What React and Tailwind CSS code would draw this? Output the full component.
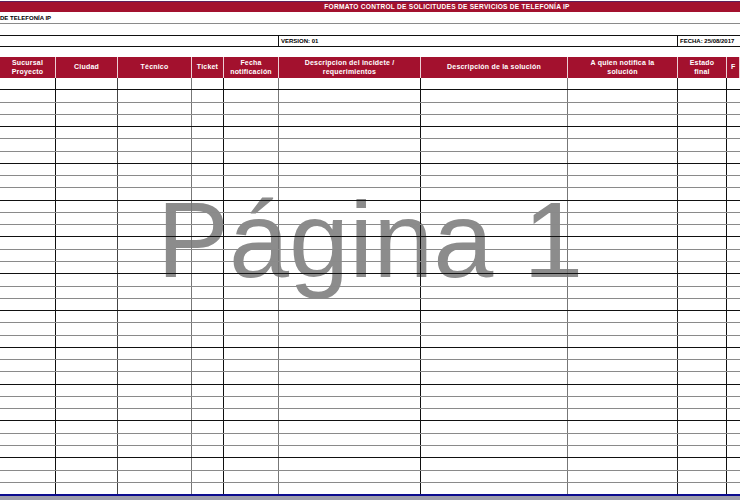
const columns = [
  { w: 'w-[56px]', line: 'border-[#111]', label: ['Sucursal', 'Proyecto'] },
  { w: 'w-[62px]', line: 'border-[#444]', label: ['Ciudad'] },
  { w: 'w-[74px]', line: 'border-[#777]', label: ['Técnico'] },
  { w: 'w-[32px]', line: 'border-[#111]', label: ['Ticket'] },
  { w: 'w-[55px]', line: 'border-[#777]', label: ['Fecha', 'notificación'] },
  { w: 'w-[142px]', line: 'border-[#111]', label: ['Descripcion del incidete /', 'requerimientos'] },
  { w: 'w-[147px]', line: 'border-[#777]', label: ['Descripción de la solución'] },
  { w: 'w-[110px]', line: 'border-[#222]', label: ['A quien notifica la', 'solución'] },
  { w: 'w-[49px]', line: 'border-[#111]', label: ['Estado', 'final'] },
  { w: 'flex-1', line: 'border-transparent', label: ['F'], left: true },
]

const ROWS = 34

function HeaderCell({ col }) {
  return (
    <div
      className={`${col.w} h-full shrink-0 border-r border-white/80 flex flex-col justify-center ${col.left ? 'items-start pl-[4px]' : 'items-center'} overflow-hidden`}
    >
      {col.label.map((t) => (
        <span key={t} className="whitespace-nowrap text-[7px] font-bold leading-[8.5px] tracking-[0.2px] text-white">
          {t}
        </span>
      ))}
    </div>
  )
}

function DataRow({ index }) {
  const last = index === ROWS - 1
  const rowLine = last ? 'border-b-0' : (index + 1) % 3 === 1 ? 'border-b border-[#111]' : 'border-b border-[#8a8a8a]'
  return (
    <div className={`flex flex-1 ${rowLine}`}>
      {columns.map((col, i) => (
        <div key={i} className={`${col.w} shrink-0 border-r ${col.line}`} />
      ))}
    </div>
  )
}

export default function App() {
  return (
    <div
      className="relative h-[500px] w-[740px] overflow-hidden bg-white"
      style={{ fontFamily: '"Liberation Sans", Arial, sans-serif' }}
    >
      {/* watermark */}
      <div className="pointer-events-none absolute left-[157px] top-[186px] z-0 whitespace-nowrap text-[108px] leading-none text-[#8c8c8c]">
        Página 1
      </div>

      <div className="relative z-10 flex h-full flex-col">
        {/* title bar */}
        <div className="h-[1px] bg-white" />
        <div className="h-[1px] bg-[#5c1f5c]" />
        <div className="flex h-[10px] items-center justify-center bg-[#a3112e] pl-[154px]">
          <span className="whitespace-nowrap text-[6.6px] font-bold leading-none tracking-[0.25px] text-white">
            FORMATO CONTROL DE SOLICITUDES DE SERVICIOS DE TELEFONÍA IP
          </span>
        </div>

        <div className="flex h-[12px] items-center border-b border-[#8a8a8a]">
          <span className="whitespace-nowrap text-[6px] font-bold leading-none text-black">DE TELEFONÍA IP</span>
        </div>
        <div className="h-[12px] border-b border-[#111]" />
        <div className="flex h-[11px] border-b border-[#111]">
          <div className="w-[279px] shrink-0 border-r border-[#111]" />
          <div className="flex w-[399px] shrink-0 items-center border-r border-[#111] pl-[2px]">
            <span className="whitespace-nowrap text-[6px] font-bold leading-none text-black">VERSION: 01</span>
          </div>
          <div className="flex flex-1 items-center pl-[2px]">
            <span className="whitespace-nowrap text-[6px] font-bold leading-none text-black">FECHA: 25/08/2017</span>
          </div>
        </div>
        <div className="h-[10px]" />

        {/* header */}
        <div className="flex h-[21px] bg-[#a3112e]">
          {columns.map((col, i) => (
            <HeaderCell key={i} col={col} />
          ))}
        </div>

        {/* rows */}
        <div className="flex h-[416px] flex-col">
          {Array.from({ length: ROWS }).map((_, i) => (
            <DataRow key={i} index={i} />
          ))}
        </div>

        <div className="h-[2px] bg-[#0d0d8f]" />
        <div className="flex-1 bg-[#9e9eab]" />
      </div>
    </div>
  )
}
